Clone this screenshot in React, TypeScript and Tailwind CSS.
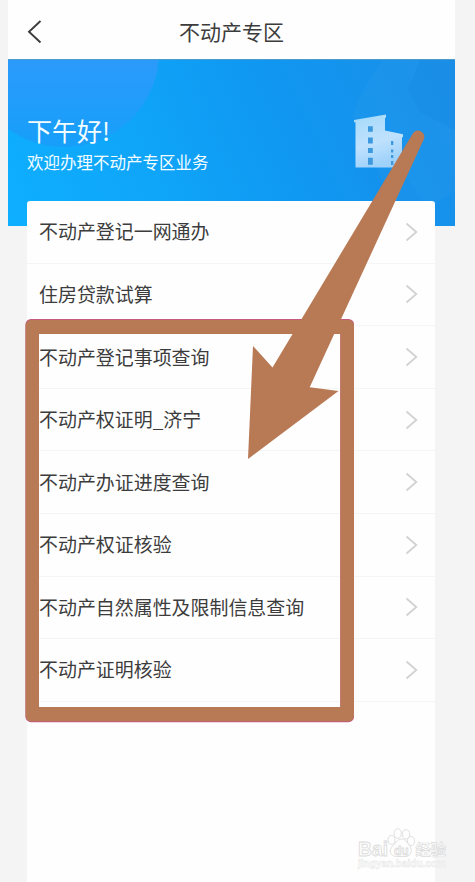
const items = [
  '不动产登记一网通办',
  '住房贷款试算',
  '不动产登记事项查询',
  '不动产权证明_济宁',
  '不动产办证进度查询',
  '不动产权证核验',
  '不动产自然属性及限制信息查询',
  '不动产证明核验',
]

function Header() {
  return (
    <header className="grid h-[59px] grid-cols-[60px_1fr_60px] items-center bg-[#fefefe] pt-1">
      <button aria-label="返回" className="pl-[19px]">
        <svg width="16" height="24" viewBox="0 0 16 24" fill="none" stroke="#3c3c3c" strokeWidth="1.9">
          <path d="M13.500 1 2 11.700 13.500 22.500" />
        </svg>
      </button>
      <h1 className="text-center text-[21px] leading-none text-[#3c3c3c]">不动产专区</h1>
    </header>
  )
}

function Building() {
  return (
    <svg width="50" height="54" viewBox="0 0 50 54">
      <defs>
        <linearGradient id="tower" x1="0" y1="0" x2="0.3" y2="1">
          <stop offset="0" stopColor="#a4dafa" />
          <stop offset="0.6" stopColor="#bfe1fd" />
          <stop offset="1" stopColor="#9fd2fb" />
        </linearGradient>
      </defs>
      <path d="M0 6 32 .5V3.500L31 4v12.500l18 3.800V23l-1 .5V53.500H1.500V8.500L0 8z" fill="url(#tower)" />
      <g fill="#3d98dd">
        <path d="M14 12.300h4.800v5.500H14zM14 23.500h4.800v6H14zM14 34h4.800v5H14zM14 43.800h4.800v7H14z" />
        <path d="M37 27h2.300v4H37zM37 35.500h2.300v3H37zM37 41h2.300v3H37zM37 47h2.300v4H37z" />
      </g>
    </svg>
  )
}

function BannerPattern() {
  return (
    <svg className="absolute inset-0 h-full w-full" viewBox="0 0 447 166" preserveAspectRatio="none">
      <defs>
        <linearGradient id="bubble" x1="0" y1="0" x2="0" y2="1">
          <stop offset="0.5" stopColor="#2d9afb" />
          <stop offset="1" stopColor="#169ffa" />
        </linearGradient>
      </defs>
      <circle cx="56" cy="-8" r="95" fill="url(#bubble)" />
      <path d="M374 0H447V130L395 166 345 56 352 36z" fill="#2a9bed" opacity=".25" />
      <path d="M447 70 412 52 400 30 412 0H447z" fill="#1583e2" opacity=".25" />
      <path d="M345 105 395 112 430 166H385z" fill="#1687e8" opacity=".15" />
    </svg>
  )
}

function Banner() {
  return (
    <section className="relative flex h-[167px] items-start justify-between overflow-hidden border-t border-[#4a9cc9] bg-[linear-gradient(65deg,#0fafff_0%,#0fa4f8_35%,#1097f1_62%,#1a8ee8_100%)] pl-[19px] pr-[51px]">
      <BannerPattern />
      <div className="relative pt-[57px] text-[#f4fdff]">
        <p className="text-[25px] leading-[27px]">下午好!</p>
        <p className="mt-[9px] text-[16.5px] leading-[18px]">欢迎办理不动产专区业务</p>
      </div>
      <div className="relative pt-[54px]">
        <Building />
      </div>
    </section>
  )
}

function Row({ label }: { label: string }) {
  return (
    <li className="flex h-[62.6px] items-center justify-between border-b border-[#f4f5f5] pl-3 pr-[17px]">
      <span className="whitespace-nowrap text-[18.95px] leading-none text-[#3c3c3c]">{label}</span>
      <svg width="13" height="20" viewBox="0 0 13 20" fill="none" stroke="#d2d2d2" strokeWidth="1.8">
        <path d="M1.500 1.500 11.300 10 1.500 18.500" />
      </svg>
    </li>
  )
}

function Watermark() {
  return (
    <svg
      className="absolute bottom-2 right-5"
      width="100"
      height="50"
      viewBox="0 0 100 50"
      fill="#fefefe"
      stroke="#dcdcdc"
      strokeWidth="0.9"
      fontFamily="'Liberation Sans', 'Noto Sans CJK SC', sans-serif"
      fontWeight="700"
    >
      <text x="3" y="32" fontSize="20" textLength="30" lengthAdjust="spacingAndGlyphs">Bai</text>
      <ellipse cx="36.500" cy="16" rx="3.500" ry="4.500" />
      <ellipse cx="42.700" cy="9.500" rx="3.700" ry="4.800" />
      <ellipse cx="51" cy="10.300" rx="3.700" ry="4.700" />
      <ellipse cx="56" cy="17" rx="3.500" ry="4.500" />
      <path d="M46.500 15c4.500 0 5 3.500 7.500 6 4 3.500 2.500 11.500-3 11.500h-9.500c-6.500 0-8-6.500-4-10.500C41 19.500 42 15 46.500 15z" />
      <text x="39" y="30.500" fontSize="12" strokeWidth="0.800">du</text>
      <text x="60.500" y="31" fontSize="15.300" strokeWidth="0.700">经验</text>
      <text x="3" y="43" fontSize="10" stroke="#e6e6e6" strokeWidth="0.500" textLength="88" lengthAdjust="spacingAndGlyphs">jingyan.baidu.com</text>
    </svg>
  )
}

function Annotation() {
  return (
    <svg className="pointer-events-none absolute inset-0" width="475" height="882" viewBox="0 0 475 882" fill="#b87955">
      <path
        fillRule="evenodd"
        fill="#c9508a"
        d="M31 319H348.500a5.500 5.500 0 0 1 5.500 5.500V716.700a5.500 5.500 0 0 1-5.500 5.500H31a5.500 5.500 0 0 1-5.500-5.500V324.500A5.500 5.500 0 0 1 31 319zM39 334V707H340.300V334z"
      />
      <path
        fillRule="evenodd"
        d="M31 319.800H348.500a5.500 5.500 0 0 1 5.500 5.500V715.900a5.500 5.500 0 0 1-5.500 5.500H31a5.500 5.500 0 0 1-5.500-5.500V325.300A5.500 5.500 0 0 1 31 319.800zM39 334V707H340.300V334z"
      />
      <path d="M248 459 253 346 272.500 367.500 412.500 134A6 6 0 0 1 423.700 139.500L309.700 387.300 338.500 391z" />
    </svg>
  )
}

export default function App() {
  return (
    <div className="relative flex h-[882px] w-[475px] flex-col overflow-hidden bg-[#f4f4f4] pl-2 pr-5 font-['Noto_Sans_CJK_SC',sans-serif]">
      <Header />
      <Banner />
      <main className="relative -mt-[25px] ml-[19px] mr-5 grow rounded-t-[3px] bg-[#fefefe]">
        <ul className="flex flex-col">
          {items.map((label) => (
            <Row key={label} label={label} />
          ))}
        </ul>
      </main>
      <Watermark />
      <Annotation />
    </div>
  )
}
